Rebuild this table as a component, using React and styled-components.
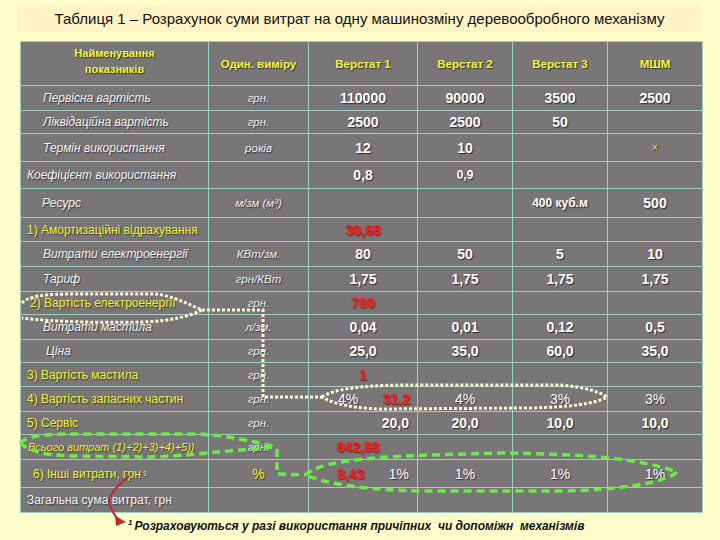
import React from "react"
import styled, { createGlobalStyle } from "styled-components"

const GlobalStyle = createGlobalStyle`
  body {
    margin: 0;
    background: #ffffcc;
    font-family: "Liberation Sans", Arial, sans-serif;
  }
`

const rows = [
  { h: 25, label: "Первісна вартість", indent: 22, italic: true, unit: "грн.", values: ["110000", "90000", "3500", "2500"] },
  { h: 23, label: "Ліквідаційна вартість", indent: 22, italic: true, unit: "грн.", values: ["2500", "2500", "50", ""] },
  { h: 28, label: "Термін використання", indent: 22, italic: true, unit: "років", values: ["12", "10", "", { text: "×", kind: "mark" }] },
  { h: 27, label: "Коефіцієнт використання", indent: 6, italic: true, unit: "", values: ["0,8", { text: "0,9", kind: "small" }, "", ""] },
  { h: 29, label: "Ресурс", indent: 21, italic: true, unit: "м/зм (м³)", values: ["", "", { text: "400 куб.м", kind: "small" }, "500"] },
  { h: 24, label: "1) Амортизаційні відрахування", indent: 6, yellow: true, unit: "", values: [{ text: "30,68", kind: "red" }, "", "", ""] },
  { h: 25, label: "Витрати електроенергії", indent: 22, italic: true, unit: "КВт/зм.", values: ["80", "50", "5", "10"] },
  { h: 25, label: "Тариф", indent: 22, italic: true, unit: "грн/КВт", values: ["1,75", "1,75", "1,75", "1,75"] },
  { h: 23, label: "2) Вартість електроенергії", indent: 9, yellow: true, unit: "грн.", values: [{ text: "780", kind: "red" }, "", "", ""] },
  { h: 25, label: "Витрати мастила", indent: 22, italic: true, unit: "л/зм.", values: ["0,04", "0,01", "0,12", "0,5"] },
  { h: 23, label: "Ціна", indent: 25, italic: true, unit: "грн.", values: ["25,0", "35,0", "60,0", "35,0"] },
  { h: 24, label: "3) Вартість мастила", indent: 6, yellow: true, unit: "грн.", values: [{ text: "1", kind: "red" }, "", "", ""] },
  {
    h: 25, label: "4) Вартість запасних частин", indent: 6, yellow: true, unit: "грн.",
    values: [
      { split: [{ text: "4%", kind: "pct" }, { text: "31,2", kind: "red" }], pad: "0 7px 0 29px" },
      { text: "4%", kind: "pct" }, { text: "3%", kind: "pct" }, { text: "3%", kind: "pct" },
    ],
  },
  { h: 23, label: "5) Сервіс", indent: 6, yellow: true, unit: "грн.", values: [{ text: "20,0", align: "flex-end" }, "20,0", "10,0", "10,0"] },
  { h: 25, label: "Всього витрат (1)+2)+3)+4)+5))", indent: 7, yellow: true, italic: true, small: true, unit: "грн.", values: [{ text: "842,88", kind: "red", pad: "0 10px 0 0" }, "", "", ""] },
  {
    h: 28, label: "6) Інші витрати, грн", sup: "1", indent: 12, yellow: true, unit: "%", unitYellow: true,
    values: [
      { split: [{ text: "8,43", kind: "red" }, { text: "1%", kind: "pct" }], pad: "0 8px 0 28px" },
      { text: "1%", kind: "pct" }, { text: "1%", kind: "pct" }, { text: "1%", kind: "pct" },
    ],
  },
  { h: 25, label: "Загальна сума витрат, грн", indent: 6, unit: "", values: ["", "", "", ""] },
]

const Page = styled.div`
  position: relative;
  width: 720px;
  height: 540px;
  padding-top: 5px;
  box-sizing: border-box;
  background: #ffffcc;
  overflow: hidden;
`

const Title = styled.h1`
  margin: 0 0 9px 17px;
  width: 685px;
  height: 27px;
  line-height: 27px;
  background: #fff4c4;
  font-size: 15px;
  font-weight: normal;
  text-align: center;
  color: #111;
`

const Grid = styled.div`
  display: grid;
  margin-left: 20px;
  width: 682px;
  grid-template-columns: 188px 100px 109px 95px 95px 95px;
  grid-template-rows: 44px ${rows.map((r) => r.h + "px").join(" ")};
  background: #787676;
  border-top: 1px solid #9fd0bf;
  border-left: 1px solid #9fd0bf;
`

const Cell = styled.div`
  display: flex;
  align-items: center;
  justify-content: ${(p) => p.$justify || "center"};
  padding: ${(p) => p.$pad || "0"};
  box-sizing: border-box;
  border-right: 1px solid #9fd0bf;
  border-bottom: 1px solid #9fd0bf;
  min-width: 0;
  white-space: nowrap;
  text-shadow: 1px 1px 1px #333;
`

const HeadCell = styled(Cell)`
  color: #f6f63c;
  font-weight: bold;
  font-size: ${(p) => (p.$small ? "11px" : "11.5px")};
  line-height: 16px;
  text-align: center;
  white-space: normal;
  padding-bottom: ${(p) => (p.$small ? "6px" : "0")};
`

const LabelCell = styled(Cell)`
  justify-content: flex-start;
  padding-left: ${(p) => p.$indent}px;
  color: ${(p) => (p.$yellow ? "#f2f23a" : "#f4f4f4")};
  font-style: ${(p) => (p.$italic ? "italic" : "normal")};
  font-size: ${(p) => (p.$small ? "11px" : "12px")};
  text-shadow: 1px 1px 1px #3a3a3a;

  sup {
    font-size: 8px;
    margin-left: 2px;
    vertical-align: 5px;
  }
`

const UnitCell = styled(Cell)`
  color: ${(p) => (p.$yellow ? "#f2f23a" : "#f0f0f0")};
  font-style: ${(p) => (p.$yellow ? "normal" : "italic")};
  font-size: ${(p) => (p.$yellow ? "14px" : "11.5px")};
`

const Value = styled.span`
  color: ${(p) => (p.$kind === "red" ? "#ff1c1c" : p.$kind === "mark" ? "#c8c878" : "#ffffff")};
  font-weight: ${(p) => (p.$kind === "pct" ? "normal" : "bold")};
  font-size: ${(p) => (p.$kind === "small" ? "12px" : p.$kind === "mark" ? "10px" : "14px")};
  text-shadow: ${(p) => (p.$kind === "red" ? "1px 1px 1px #5a2a2a" : "1px 1px 1px #2e2e2e")};
`

const Footnote = styled.p`
  margin: 2px 0 0 128px;
  font-size: 12px;
  font-weight: bold;
  font-style: italic;
  color: #111;
  line-height: 16px;
  white-space: pre;

  sup {
    font-size: 8px;
    vertical-align: 5px;
    margin-right: 2px;
  }
`

const Overlay = styled.svg`
  position: absolute;
  top: 0;
  left: 0;
  pointer-events: none;
`

const headers = ["Один. виміру", "Верстат 1", "Верстат 2", "Верстат 3", "МШМ"]

const renderValue = (v, i) => {
  if (typeof v === "string") {
    return (
      <Cell key={i}>
        <Value>{v}</Value>
      </Cell>
    )
  }
  if (v.split) {
    return (
      <Cell key={i} $justify="space-between" $pad={v.pad}>
        {v.split.map((s) => (
          <Value key={s.text} $kind={s.kind}>
            {s.text}
          </Value>
        ))}
      </Cell>
    )
  }
  return (
    <Cell key={i} $justify={v.align} $pad={v.pad || (v.align ? "0 8px 0 0" : "0")}>
      <Value $kind={v.kind}>{v.text}</Value>
    </Cell>
  )
}

const Annotations = () => (
  <Overlay width="720" height="540" viewBox="0 0 720 540">
    <g fill="none" stroke="#fff6d4" strokeWidth="3" strokeDasharray="3 2">
      <path d="M22 303 C28 296 45 294 75 294 L155 294 C170 295 186 303 202 310 C190 316 172 321 142 322 C100 323 55 322 22 318" />
      <path d="M202 310 L263 310 L263 397 L322 397" />
      <path d="M322 397 C334 389 358 386 400 385 L560 385 C585 387 600 392 607 397 C595 404 570 407 530 408 L380 409 C350 408 332 403 322 397 Z" />
    </g>
    <g fill="none" stroke="#6aec46" strokeWidth="3.5" strokeDasharray="8 5">
      <path d="M20 443 C26 437 42 434 70 434 L200 434 C230 436 255 442 277 447" />
      <path d="M20 443 C28 450 42 455 70 456 L150 457 C190 456 230 450 277 447" />
      <path d="M277 449 L277 474 L305 475" />
      <path d="M305 475 C320 463 350 458 430 455 L500 453 C580 454 640 458 677 472 C665 483 620 490 560 491 L420 491 C370 490 330 485 305 475 Z" />
    </g>
    <path d="M129 476 C119 485 104 496 111 508 C114 515 117 519 121 521" fill="none" stroke="#c4282c" strokeWidth="2" />
    <path d="M115 516 L126 522 L116 526 Z" fill="#c4282c" />
  </Overlay>
)

const App = () => (
  <Page>
    <GlobalStyle />
    <Title>Таблиця 1 – Розрахунок суми витрат на одну машинозміну деревообробного механізму</Title>
    <Grid>
      <HeadCell $small>
        Найменування
        <br />
        показників
      </HeadCell>
      {headers.map((h) => (
        <HeadCell key={h}>{h}</HeadCell>
      ))}
      {rows.map((r) => (
        <React.Fragment key={r.label}>
          <LabelCell $indent={r.indent} $yellow={r.yellow} $italic={r.italic} $small={r.small}>
            {r.label}
            {r.sup && <sup>{r.sup}</sup>}
          </LabelCell>
          <UnitCell $yellow={r.unitYellow}>{r.unit}</UnitCell>
          {r.values.map(renderValue)}
        </React.Fragment>
      ))}
    </Grid>
    <Footnote>
      <sup>1</sup>Розраховуються у разі використання причіпних  чи допоміжн  механізмів
    </Footnote>
    <Annotations />
  </Page>
)

export default App
